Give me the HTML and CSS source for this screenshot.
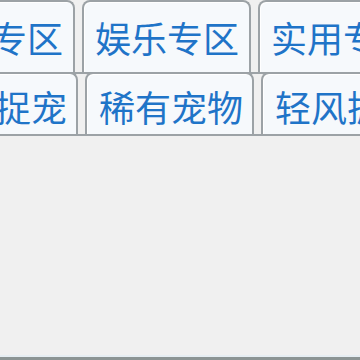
FILE: index.html
```html
<html>
	<head>
		<meta charset="UTF-8">
		<link rel="stylesheet" href="styles.css">
	</head>
	<body>
		<div class="fenetre">
			<div class="ligne haut">
				<a class="onglet">宠物专区</a>
				<a class="onglet">娱乐专区</a>
				<a class="onglet">实用专区</a>
			</div>
			<div class="ligne bas">
				<a class="onglet">自动捉宠</a>
				<a class="onglet">稀有宠物</a>
				<a class="onglet">轻风抓宠</a>
			</div>
			<div class="panneau"></div>
		</div>
	</body>
</html>
```

FILE: styles.css
```css
html, body {
	margin: 0;
	height: 100%;
	overflow: hidden;
	background: #f0f0f0;
}
.fenetre {
	height: 360px;
	display: flex;
	flex-direction: column;
	font-family: "Noto Sans CJK SC", "Noto Sans", sans-serif;
}
.ligne {
	display: flex;
	gap: 7px;
	flex: none;
	border-bottom: 2px solid #9ca2a6;
	white-space: nowrap;
}
.haut {
	margin-left: -94px;
	height: 72px;
}
.bas {
	margin-left: -91px;
	margin-top: -2px;
	height: 62px;
}
.onglet {
	flex: none;
	display: flex;
	align-items: center;
	box-sizing: border-box;
	padding: 0 10px 0 11px;
	border: 2px solid #9ca2a6;
	border-bottom: none;
	border-radius: 8px 8px 0 0;
	background: #f6f9fc;
	box-shadow: inset 1px 1px 0 #fff;
	color: #1f74c8;
	font-size: 36px;
	line-height: 36px;
}
.bas .onglet {
	padding-top: 4px;
	padding-left: 12px;
	padding-right: 9px;
}
.panneau {
	flex: 1;
	background: #f0f0f0;
	border-bottom: 3px solid #8c9494;
	box-shadow: inset 0 -2px 0 #e6edf2;
}
```
